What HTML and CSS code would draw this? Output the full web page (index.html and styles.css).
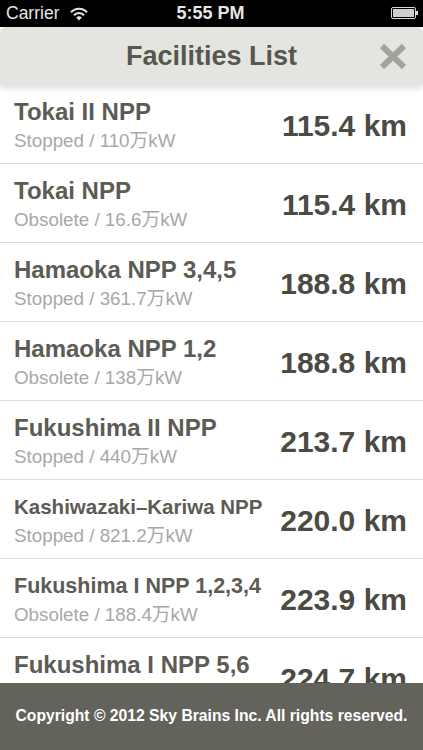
FILE: index.html
```html
<!doctype html>
<html>

<head>
    <title>Facilities List</title>
    <meta charset="utf-8">
    <meta name="viewport" content="width=device-width, initial-scale=1">
    <link rel="stylesheet" href="styles.css">
</head>

<body>
    <div class="screen">
        <div class="status">
            <div class="status-left">
                <span>Carrier</span>
                <svg class="wifi" width="18" height="14" viewBox="0 0 18 14">
                    <path d="M1 5.2 A11 11 0 0 1 17 5.2" fill="none" stroke="#e6e6e6" stroke-width="2.2"/>
                    <path d="M4 8.2 A6.8 6.8 0 0 1 14 8.2" fill="none" stroke="#e6e6e6" stroke-width="2.2"/>
                    <path d="M9 13.5 L6.2 10.6 A4 4 0 0 1 11.8 10.6 Z" fill="#e6e6e6"/>
                </svg>
            </div>
            <span class="time">5:55 PM</span>
            <div class="status-right">
                <svg class="battery" width="28" height="12" viewBox="0 0 28 12">
                    <rect x="0.5" y="0.5" width="24" height="11" rx="1.5" fill="none" stroke="#d8d8d8"/>
                    <rect x="2" y="2" width="21" height="8" fill="#cfcfcf"/>
                    <rect x="25" y="4" width="2" height="4" fill="#d8d8d8"/>
                </svg>
            </div>
        </div>

        <div class="nav">
            <span class="nav-side"></span>
            <h1>Facilities List</h1>
            <span class="nav-side">
                <svg class="close" width="28" height="27" viewBox="0 0 28 27">
                    <path d="M3 3 L25 24 M25 3 L3 24" stroke="#a4a39b" stroke-width="6" stroke-linecap="butt"/>
                </svg>
            </span>
        </div>

        <ul class="list">
            <li class="row">
                <div class="info">
                    <div class="name">Tokai II NPP</div>
                    <div class="sub">Stopped / 110万kW</div>
                </div>
                <div class="dist">115.4 km</div>
            </li>
            <li class="row">
                <div class="info">
                    <div class="name">Tokai NPP</div>
                    <div class="sub">Obsolete / 16.6万kW</div>
                </div>
                <div class="dist">115.4 km</div>
            </li>
            <li class="row">
                <div class="info">
                    <div class="name">Hamaoka NPP 3,4,5</div>
                    <div class="sub">Stopped / 361.7万kW</div>
                </div>
                <div class="dist">188.8 km</div>
            </li>
            <li class="row">
                <div class="info">
                    <div class="name">Hamaoka NPP 1,2</div>
                    <div class="sub">Obsolete / 138万kW</div>
                </div>
                <div class="dist">188.8 km</div>
            </li>
            <li class="row">
                <div class="info">
                    <div class="name">Fukushima II NPP</div>
                    <div class="sub">Stopped / 440万kW</div>
                </div>
                <div class="dist">213.7 km</div>
            </li>
            <li class="row">
                <div class="info">
                    <div class="name small">Kashiwazaki–Kariwa NPP</div>
                    <div class="sub">Stopped / 821.2万kW</div>
                </div>
                <div class="dist">220.0 km</div>
            </li>
            <li class="row">
                <div class="info">
                    <div class="name medium">Fukushima I NPP 1,2,3,4</div>
                    <div class="sub">Obsolete / 188.4万kW</div>
                </div>
                <div class="dist">223.9 km</div>
            </li>
            <li class="row">
                <div class="info">
                    <div class="name">Fukushima I NPP 5,6</div>
                    <div class="sub">Obsolete / 469.6万kW</div>
                </div>
                <div class="dist">224.7 km</div>
            </li>
        </ul>

        <div class="footer">Copyright © 2012 Sky Brains Inc. All rights reserved.</div>
    </div>
</body>

</html>
```

FILE: styles.css
```css
* {
    margin: 0;
    padding: 0;
    box-sizing: border-box;
}

body {
    background: #000;
    font-family: "Liberation Sans", Arial, "Noto Sans CJK JP", sans-serif;
}

.screen {
    width: 423px;
    height: 750px;
    display: flex;
    flex-direction: column;
    background: #fff;
    overflow: hidden;
}

/* status bar */

.status {
    height: 27px;
    flex: none;
    background: #000;
    color: #e6e6e6;
    display: flex;
    align-items: center;
    padding: 0 4px 1px 6px;
}

.status-left,
.status-right {
    flex: 1;
    display: flex;
    align-items: center;
}

.status-left span {
    font-size: 17.5px;
}

.wifi {
    margin-left: 11px;
    margin-top: 1px;
}

.time {
    font-size: 18px;
    font-weight: bold;
    margin-right: 4px;
}

.status-right {
    justify-content: flex-end;
}

/* nav bar */

.nav {
    height: 58px;
    flex: none;
    background: #e5e5e0;
    border-radius: 6px 6px 0 0;
    display: flex;
    align-items: center;
    position: relative;
    z-index: 1;
    box-shadow: 0 3px 6px rgba(0, 0, 0, 0.14);
}

.nav h1 {
    flex: 1;
    text-align: center;
    font-size: 27px;
    font-weight: bold;
    color: #57564f;
}

.nav-side {
    width: 60px;
    display: flex;
    justify-content: flex-end;
    padding-right: 16px;
}

.close {
    display: block;
}

/* list */

.list {
    flex: 1;
    list-style: none;
    overflow: hidden;
}

.row {
    height: 79px;
    display: flex;
    align-items: center;
    padding: 14px 16px 11px 14px;
    border-bottom: 1px solid #dedede;
}

.info {
    flex: 1;
    min-width: 0;
}

.name {
    font-size: 24px;
    line-height: 26px;
    font-weight: bold;
    color: #5c5b54;
    white-space: nowrap;
}

.name.medium {
    font-size: 21.5px;
}

.name.small {
    font-size: 20.5px;
}

.sub {
    font-size: 18.8px;
    line-height: 22px;
    margin-top: 5px;
    color: #a8a8a6;
    white-space: nowrap;
}

.dist {
    font-size: 30px;
    line-height: 34px;
    font-weight: bold;
    color: #4b4a43;
    white-space: nowrap;
}

/* footer */

.footer {
    height: 67px;
    flex: none;
    background: #64635b;
    color: #fff;
    font-size: 15.7px;
    font-weight: bold;
    text-align: center;
    padding-top: 24px;
}
```
